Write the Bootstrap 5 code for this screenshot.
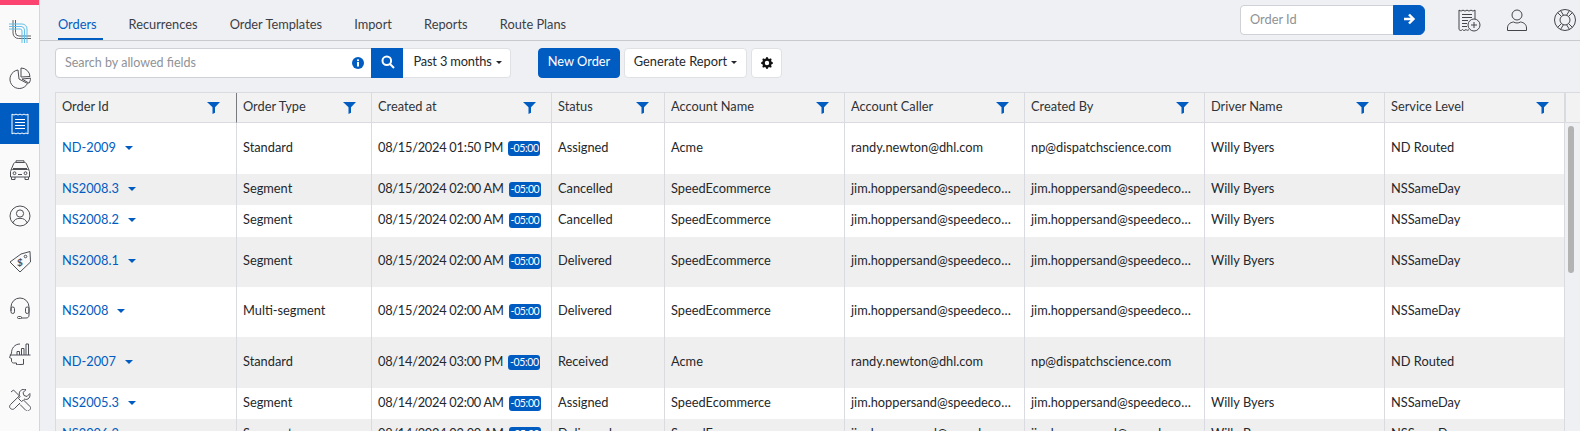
<!doctype html>
<html lang="en">
<head>
<meta charset="utf-8">
<title>Orders</title>
<link href="https://cdn.jsdelivr.net/npm/bootstrap@5.3.0/dist/css/bootstrap.min.css" rel="stylesheet">
<style>
:root{--blue:#015cc2;--line:#d9dbe0}
html,body{height:100%;overflow:hidden}
body{font-family:Lato,"Liberation Sans",sans-serif;font-size:12.8px;color:#24272b;background:#eff0f4}
.shell{height:431px}
.rail{width:40px;flex:none;background:#fafafa;border-right:1.5px solid #d5d6da}
.rail-top{height:5px;background:#fb4570}
.rail-logo{height:52px}
.rail-item{height:41px;margin-bottom:5px;color:#4d4f55}
.rail-item.on{background:var(--blue);color:#fff}
.rail-item svg{width:22px;height:22px;fill:none;stroke:currentColor;stroke-width:1}
.rail-logo svg{width:22px;height:23px;fill:none;stroke-width:1}
.work{min-width:0}
.topbar{height:41px;border-bottom:1px solid #c9cacd}
.tabs{padding-left:18px}
.tabs .nav-link{padding:14px 0 0;height:40px;line-height:20px;margin-right:32.2px;color:#3b3e44;font-size:12.8px;border-bottom:2px solid transparent}
.tabs .nav-link.active{color:var(--blue);border-bottom-color:var(--blue);padding-right:6px;margin-right:26px}
.idgroup{width:185px;height:30px;margin-right:32px}
.idgroup .form-control{height:30px;font-size:12.8px;border-color:#cfd1d6;padding:0 9px 2px;border-radius:4px 0 0 4px}
.form-control::placeholder{color:#8f9296}
.blue-btn{background:var(--blue);border-color:var(--blue);color:#fff;padding:0 0 2px;display:flex;align-items:center;justify-content:center}
.blue-btn:hover{background:var(--blue);border-color:var(--blue);color:#fff}
.idgroup .blue-btn{width:32px}
.top-icon{width:24px;height:24px;fill:none;stroke:#43454b;stroke-width:1;margin-right:24px;flex:none}
.top-end{margin-right:3px}
.toprow{padding-top:5px}
.toolbar{height:51px;padding:7px 0 0 15px}
.searchgroup{width:458px;height:30px}
.searchbox{position:relative;width:317px}
.searchbox .form-control{height:30px;font-size:12.5px;border-color:#cfd1d6;padding:0 9px 2px;border-radius:4px 0 0 4px}
.info-ic{position:absolute;right:8px;top:9px;width:12px;height:12px;z-index:5}
.searchgroup .blue-btn{width:33px;height:30px;border-radius:0}
.white-btn{background:#fff;border:1px solid #e0e1e5;color:#24272b;font-size:12.8px;height:30px;padding:0 0 2px;display:inline-flex;align-items:center;justify-content:center;border-radius:4px}
.white-btn:hover{background:#fff;color:#24272b;border-color:#e0e1e5}
.white-btn.dropdown-toggle::after{margin-left:4px;border-top-width:.27em;border-right-width:.27em;border-left-width:.27em}
.searchgroup .white-btn{width:108px;border-radius:0 4px 4px 0;border-left:0;letter-spacing:-.15px;padding-left:2px}
.new-btn{width:82px;height:30px;font-size:12.8px;margin-left:25px;margin-right:4px;border-radius:4px}
.gen-btn{width:123px;margin-right:4px}
.gear-btn{width:31px;padding:0}
.gridwrap{position:relative;margin-left:15px;flex:1;overflow:hidden;border-top:1px solid var(--line);border-left:1px solid var(--line)}
.grid{table-layout:fixed;width:1509px;margin:0;--bs-table-bg:transparent;border-collapse:separate;border-spacing:0}
.grid th,.grid td{padding:0 6px 2px;vertical-align:middle;font-weight:400;font-size:12.8px;color:#24272b;white-space:nowrap;overflow:hidden;text-overflow:ellipsis;border-bottom:0;border-right:1px solid var(--line);background:#fff;box-shadow:none}
.grid th{height:30px;background:#f2f2f3;border-bottom:1px solid var(--line);position:relative;color:#2f3237}
.grid th:first-child{border-right:1px solid #777a80}
.grid tbody tr:nth-child(even) td{background:#efeff0}
.grid td.stamp{letter-spacing:-.26px;text-overflow:clip}
.fil{position:absolute;right:15px;top:9px;width:13px;height:12px;fill:var(--blue)}
.grid th:first-child .fil{right:16px}
.col-a{width:181px}.col-b{width:135px}.col-c{width:180px}.col-d{width:113px}.col-e{width:180px}
.h51{height:51px}.h50{height:50px}.h32{height:32px}.h31{height:31px}
.oid{color:var(--blue);text-decoration:none}
.caret-b{display:inline-block;width:0;height:0;border-left:4px solid transparent;border-right:4px solid transparent;border-top:4px solid var(--blue);margin-left:9px;vertical-align:2px}
.tz{background:var(--blue);color:#fff;font-size:10.5px;font-weight:400;padding:2px 2px;border-radius:3px;letter-spacing:-.35px;margin-left:5px;vertical-align:0;line-height:11px;display:inline-block;width:32px;text-align:center}
.scrollcap{position:absolute;left:1509px;top:0;width:16px;height:30px;background:#f2f2f3;border-bottom:1px solid var(--line);border-left:1px solid var(--line)}
.scrollthumb{position:absolute;left:1512px;top:33px;width:6px;height:147px;border-radius:3px;background:#b3b3b3}
</style>
</head>
<body>
<svg width="0" height="0" class="d-block position-absolute">
<symbol id="funnel" viewBox="0 0 13 12"><path d="M0 0h13L8 5.200V10.800L5.500 12V5.200z"/></symbol>
</svg>
<div class="d-flex shell">
  <aside class="rail d-flex flex-column">
    <div class="rail-top"></div>
    <div class="rail-logo d-flex align-items-center justify-content-center">
      <svg viewBox="0 0 22 23"><path d="M4 0v13a5.500 5.500 0 0 0 5.500 5.500H22M6.500 0v12.500a3.500 3.500 0 0 0 3.500 3.500h12" stroke="#606267"/><path d="M0 4h13a5 5 0 0 1 5 5v14M0 6.500h12a3.500 3.500 0 0 1 3.500 3.500v13M0 9h11a2 2 0 0 1 2 2v12" stroke="#62c0ea"/></svg>
    </div>
    <div class="rail-item d-flex align-items-center justify-content-center">
      <svg viewBox="0 0 22 22"><path d="M9 3A9.300 9.300 0 1 0 18.500 16.500L10 12z"/><path d="M12 1v9l9-.5A9 9 0 0 0 12 1zM13 12l8.500-.8c0 2-.5 3.500-1.500 5z"/></svg>
    </div>
    <div class="rail-item on d-flex align-items-center justify-content-center">
      <svg viewBox="0 0 22 22"><path d="M3 1c1.300 1.200 2.700 1.200 4 0 1.300 1.200 2.700 1.200 4 0 1.300 1.200 2.700 1.200 4 0 1.300 1.200 2.700 1.200 4 0v20c-1.300-1.200-2.700-1.200-4 0-1.300-1.200-2.700-1.200-4 0-1.300-1.200-2.700-1.200-4 0-1.300-1.200-2.700-1.200-4 0zM6 6.500h10M6 9.500h10M6 12.500h10M6 15.500h10"/></svg>
    </div>
    <div class="rail-item d-flex align-items-center justify-content-center">
      <svg viewBox="0 0 22 22"><path d="M2 11l2.500-6c.3-1 1-1.500 2-1.500h9c1 0 1.700.5 2 1.500L20 11M7 3.500V1.800h8v1.700M4 9.500h14M1.500 12.500c0-1 1-2 2-2h15c1 0 2 1 2 2V18h-19zM2.500 18v2.500h3.500V18M16 18v2.500h3.500V18M9 15.500h4"/><circle cx="5.500" cy="14.200" r="1.400"/><circle cx="16.500" cy="14.200" r="1.400"/></svg>
    </div>
    <div class="rail-item d-flex align-items-center justify-content-center">
      <svg viewBox="0 0 22 22"><circle cx="11" cy="11" r="10"/><circle cx="11" cy="8.500" r="3.600"/><path d="M4 17.800c1-3 3.500-4.500 7-4.500s6 1.500 7 4.500"/></svg>
    </div>
    <div class="rail-item d-flex align-items-center justify-content-center">
      <svg viewBox="0 0 22 22"><path d="M1 11L12 3 21 .500 21.500 11 11 21z"/><circle cx="16.500" cy="5.500" r="1.300"/><text x="8" y="15" font-size="10" font-weight="700" fill="currentColor" stroke="none" font-family="Lato,sans-serif">$</text></svg>
    </div>
    <div class="rail-item d-flex align-items-center justify-content-center">
      <svg viewBox="0 0 22 22"><path d="M2 14V10a9 9 0 0 1 18 0v8c0 2-1 3-3 3h-5"/><rect x="2" y="10" width="3.500" height="6.500" rx="1.700"/><rect x="16.500" y="10" width="3.500" height="6.500" rx="1.700"/><rect x="8.500" y="19.500" width="4" height="2" rx="1"/></svg>
    </div>
    <div class="rail-item d-flex align-items-center justify-content-center">
      <svg viewBox="0 0 22 22"><path d="M11 1C5.500 1 2.500 5.500 2.500 10L.5 14.500l2 1V18c0 1 1 2 2 2h3v1.800l7-.5V16M.8 12h20.700"/><path d="M8 12V8.500h2.500V12M12.500 12V5.500H15V12M17 12V1h2.500v11"/></svg>
    </div>
    <div class="rail-item d-flex align-items-center justify-content-center">
      <svg viewBox="0 0 22 22"><path d="M2 3L4.500 1l6.500 6.500-1.500 2 3 3 2-1.500 6.500 6.500c1 1 1 2 0 3l-1 1c-1 1-2 1-3 0l-6-6"/><path d="M15 10c2 .8 4 .5 5-1 1-1.200 1.200-3 .8-4.500L18 7.500l-3-1-1-3 3-2.800c-2-.8-4-.3-5.500 1-1.300 1.200-1.500 3-1 5L1.500 15.500c-1.200 1.200-1.200 3 0 4s2.800 1.200 4 0l5.500-5.500"/></svg>
    </div>
  </aside>
  <main class="work flex-grow-1 d-flex flex-column">
    <div class="topbar d-flex align-items-start justify-content-between">
      <nav class="nav tabs">
        <a class="nav-link active" href="#">Orders</a>
        <a class="nav-link" href="#">Recurrences</a>
        <a class="nav-link" href="#">Order Templates</a>
        <a class="nav-link" href="#">Import</a>
        <a class="nav-link" href="#">Reports</a>
        <a class="nav-link" href="#">Route Plans</a>
      </nav>
      <div class="d-flex align-items-center toprow">
        <div class="input-group idgroup flex-nowrap">
          <input class="form-control" placeholder="Order Id" aria-label="Order Id">
          <button class="btn blue-btn" aria-label="Go"><svg width="14" height="14" viewBox="0 0 14 14" fill="none" stroke="#fff" stroke-width="2.400"><path d="M2 7h9M7 2.500L11.500 7 7 11.500"/></svg></button>
        </div>
        <svg class="top-icon" viewBox="0 0 24 24"><path d="M2 2c1.500 1.300 2.500 1.300 4 0 1.500 1.300 2.500 1.300 4 0 1.500 1.300 2.500 1.300 4 0 1.500 1.300 2.500 1.300 4 0v9M12 21.500c-1 1-2 1-3 0-1.500 1.300-2.500 1.300-3.500 0-1 1.300-2.500 1.300-3.500 0V2M5 6.500h10M5 9.500h10M5 12.500h6M5 15.500h5M5 18.500h5"/><circle cx="17" cy="17" r="6"/><path d="M17 14v6M14 17h6"/></svg>
        <svg class="top-icon" viewBox="0 0 24 24"><circle cx="12" cy="7" r="5"/><path d="M2.500 22.500v-2.500c0-3.500 2.500-5.500 6-6 2.200 1.300 4.800 1.300 7 0 3.500.5 6 2.500 6 6v2.500z"/></svg>
        <svg class="top-icon top-end" viewBox="0 0 24 24"><circle cx="12" cy="12" r="10.500"/><circle cx="12" cy="12" r="5"/><path d="M4.600 4.600l3.900 3.900M19.400 4.600l-3.900 3.900M4.600 19.400l3.900-3.900M19.400 19.400l-3.900-3.900M7.500 2.500l3 4.800M16.500 2.500l-3 4.800M7.500 21.500l3-4.800M16.500 21.500l-3-4.800"/></svg>
      </div>
    </div>
    <div class="toolbar d-flex align-items-start">
      <div class="input-group searchgroup flex-nowrap">
        <div class="searchbox">
          <input class="form-control" placeholder="Search by allowed fields" aria-label="Search">
          <svg class="info-ic" viewBox="0 0 12 12"><circle cx="6" cy="6" r="6" fill="#015cc2"/><rect x="5" y="5" width="2" height="4.500" fill="#fff"/><rect x="5" y="2.400" width="2" height="1.700" fill="#fff"/></svg>
        </div>
        <button class="btn blue-btn" aria-label="Search"><svg width="14" height="14" viewBox="0 0 14 14" fill="none" stroke="#fff" stroke-width="2"><circle cx="5.800" cy="5.800" r="4.300"/><path d="M9 9l4 4"/></svg></button>
        <button class="btn white-btn dropdown-toggle">Past 3 months</button>
      </div>
      <button class="btn blue-btn new-btn">New Order</button>
      <button class="btn white-btn gen-btn dropdown-toggle">Generate Report</button>
      <button class="btn white-btn gear-btn" aria-label="Settings"><svg width="12" height="12" viewBox="0 0 16 16" fill="#111"><path d="M9.405 1.050c-.413-1.400-2.397-1.400-2.810 0l-.1.340a1.464 1.464 0 0 1-2.105.872l-.31-.17c-1.283-.698-2.686.705-1.987 1.987l.169.311c.446.820.023 1.841-.872 2.105l-.34.100c-1.400.413-1.400 2.397 0 2.810l.340.100a1.464 1.464 0 0 1 .872 2.105l-.17.310c-.698 1.283.705 2.686 1.987 1.987l.311-.169a1.464 1.464 0 0 1 2.105.872l.1.340c.413 1.400 2.397 1.400 2.810 0l.1-.340a1.464 1.464 0 0 1 2.105-.872l.310.170c1.283.698 2.686-.705 1.987-1.987l-.169-.311a1.464 1.464 0 0 1 .872-2.105l.340-.100c1.400-.413 1.400-2.397 0-2.810l-.340-.100a1.464 1.464 0 0 1-.872-2.105l.170-.310c.698-1.283-.705-2.686-1.987-1.987l-.311.169a1.464 1.464 0 0 1-2.105-.872l-.1-.340zM8 10.930a2.929 2.929 0 1 1 0-5.860 2.929 2.929 0 0 1 0 5.858z"/></svg></button>
    </div>
    <div class="gridwrap">
      <table class="table grid">
        <colgroup><col class="col-a"><col class="col-b"><col class="col-c"><col class="col-d"><col class="col-e"><col class="col-e"><col class="col-e"><col class="col-e"><col class="col-e"></colgroup>
        <thead><tr>
          <th>Order Id<svg class="fil"><use href="#funnel"/></svg></th>
          <th>Order Type<svg class="fil"><use href="#funnel"/></svg></th>
          <th>Created at<svg class="fil"><use href="#funnel"/></svg></th>
          <th>Status<svg class="fil"><use href="#funnel"/></svg></th>
          <th>Account Name<svg class="fil"><use href="#funnel"/></svg></th>
          <th>Account Caller<svg class="fil"><use href="#funnel"/></svg></th>
          <th>Created By<svg class="fil"><use href="#funnel"/></svg></th>
          <th>Driver Name<svg class="fil"><use href="#funnel"/></svg></th>
          <th>Service Level<svg class="fil"><use href="#funnel"/></svg></th>
        </tr></thead>
        <tbody>
          <tr class="h51"><td><a class="oid" href="#">ND-2009</a><span class="caret-b"></span></td><td>Standard</td><td class="stamp">08/15/2024 01:50 PM<span class="tz">-05:00</span></td><td>Assigned</td><td>Acme</td><td>randy.newton@dhl.com</td><td>np@dispatchscience.com</td><td>Willy Byers</td><td>ND Routed</td></tr>
          <tr class="h31"><td><a class="oid" href="#">NS2008.3</a><span class="caret-b"></span></td><td>Segment</td><td class="stamp">08/15/2024 02:00 AM<span class="tz">-05:00</span></td><td>Cancelled</td><td>SpeedEcommerce</td><td>jim.hoppersand@speedecommerce.com</td><td>jim.hoppersand@speedecommerce.com</td><td>Willy Byers</td><td>NSSameDay</td></tr>
          <tr class="h32"><td><a class="oid" href="#">NS2008.2</a><span class="caret-b"></span></td><td>Segment</td><td class="stamp">08/15/2024 02:00 AM<span class="tz">-05:00</span></td><td>Cancelled</td><td>SpeedEcommerce</td><td>jim.hoppersand@speedecommerce.com</td><td>jim.hoppersand@speedecommerce.com</td><td>Willy Byers</td><td>NSSameDay</td></tr>
          <tr class="h50"><td><a class="oid" href="#">NS2008.1</a><span class="caret-b"></span></td><td>Segment</td><td class="stamp">08/15/2024 02:00 AM<span class="tz">-05:00</span></td><td>Delivered</td><td>SpeedEcommerce</td><td>jim.hoppersand@speedecommerce.com</td><td>jim.hoppersand@speedecommerce.com</td><td>Willy Byers</td><td>NSSameDay</td></tr>
          <tr class="h50"><td><a class="oid" href="#">NS2008</a><span class="caret-b"></span></td><td>Multi-segment</td><td class="stamp">08/15/2024 02:00 AM<span class="tz">-05:00</span></td><td>Delivered</td><td>SpeedEcommerce</td><td>jim.hoppersand@speedecommerce.com</td><td>jim.hoppersand@speedecommerce.com</td><td></td><td>NSSameDay</td></tr>
          <tr class="h51"><td><a class="oid" href="#">ND-2007</a><span class="caret-b"></span></td><td>Standard</td><td class="stamp">08/14/2024 03:00 PM<span class="tz">-05:00</span></td><td>Received</td><td>Acme</td><td>randy.newton@dhl.com</td><td>np@dispatchscience.com</td><td></td><td>ND Routed</td></tr>
          <tr class="h31"><td><a class="oid" href="#">NS2005.3</a><span class="caret-b"></span></td><td>Segment</td><td class="stamp">08/14/2024 02:00 AM<span class="tz">-05:00</span></td><td>Assigned</td><td>SpeedEcommerce</td><td>jim.hoppersand@speedecommerce.com</td><td>jim.hoppersand@speedecommerce.com</td><td>Willy Byers</td><td>NSSameDay</td></tr>
          <tr class="h31"><td><a class="oid" href="#">NS2006.2</a><span class="caret-b"></span></td><td>Segment</td><td class="stamp">08/14/2024 02:00 AM<span class="tz">-05:00</span></td><td>Delivered</td><td>SpeedEcommerce</td><td>jim.hoppersand@speedecommerce.com</td><td>jim.hoppersand@speedecommerce.com</td><td>Willy Byers</td><td>NSSameDay</td></tr>
        </tbody>
      </table>
      <div class="scrollcap"></div>
      <div class="scrollthumb"></div>
    </div>
  </main>
</div>
<script src="https://cdn.jsdelivr.net/npm/bootstrap@5.3.0/dist/js/bootstrap.bundle.min.js"></script>
</body>
</html>
